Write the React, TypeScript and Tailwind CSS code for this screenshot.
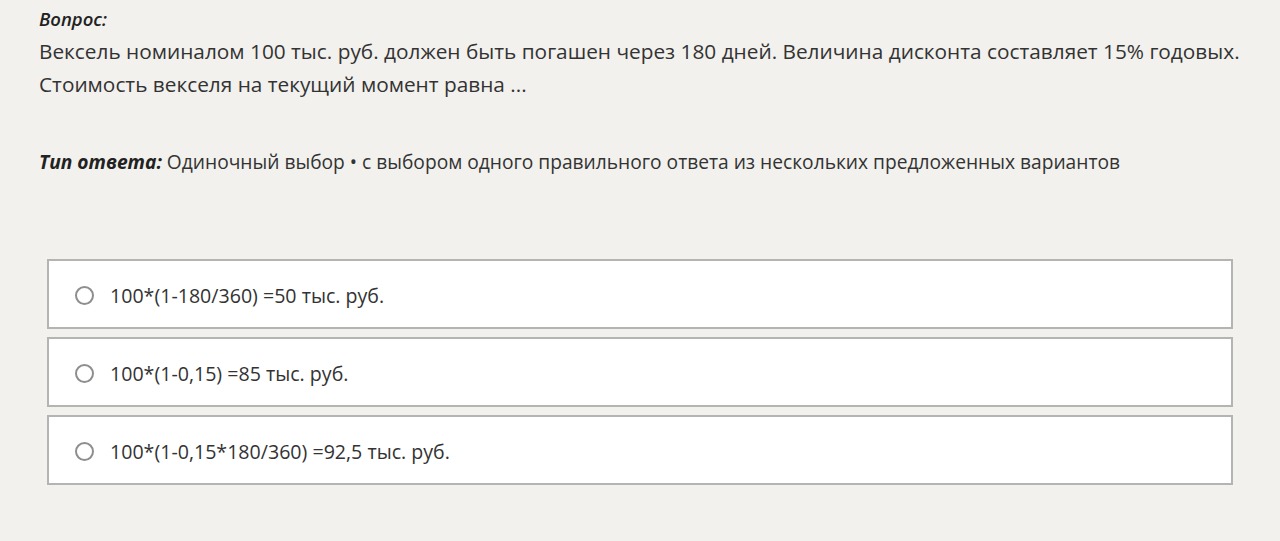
const options = [
  '100*(1-180/360) =50 тыс. руб.',
  '100*(1-0,15) =85 тыс. руб.',
  '100*(1-0,15*180/360) =92,5 тыс. руб.',
];

export default function App() {
  return (
    <div
      className="min-h-[541px] bg-[#f2f1ed] text-[#333333] px-[39px] pt-[5px]"
      style={{ fontFamily: '"Open Sans", "Noto Sans", sans-serif' }}
    >
      <div className="text-[18.5px] italic font-semibold leading-[28px] text-[#222]">Вопрос:</div>
      <p className="text-[20.8px] leading-[33px] mt-[2px] whitespace-nowrap">
        Вексель номиналом 100 тыс. руб. должен быть погашен через 180 дней. Величина дисконта
        составляет 15% годовых.
        <br />
        Стоимость векселя на текущий момент равна ...
      </p>
      <p className="text-[19.2px] leading-[33px] mt-[44px]">
        <span className="italic font-bold text-[#222]">Тип ответа:</span> Одиночный выбор • с
        выбором одного правильного ответа из нескольких предложенных вариантов
      </p>
      <div className="mt-[81px] ml-[8px] w-[1186px] flex flex-col gap-[8px]">
        {options.map(text => (
          <label
            key={text}
            className="flex items-center h-[70px] bg-white border-2 border-[#b4b4b2] pl-[26px] pt-[3px]"
          >
            <span className="w-[19px] h-[19px] rounded-full border-2 border-[#8e8e8e] bg-white" />
            <span className="ml-[16px] text-[19.6px]">{text}</span>
          </label>
        ))}
      </div>
    </div>
  );
}
